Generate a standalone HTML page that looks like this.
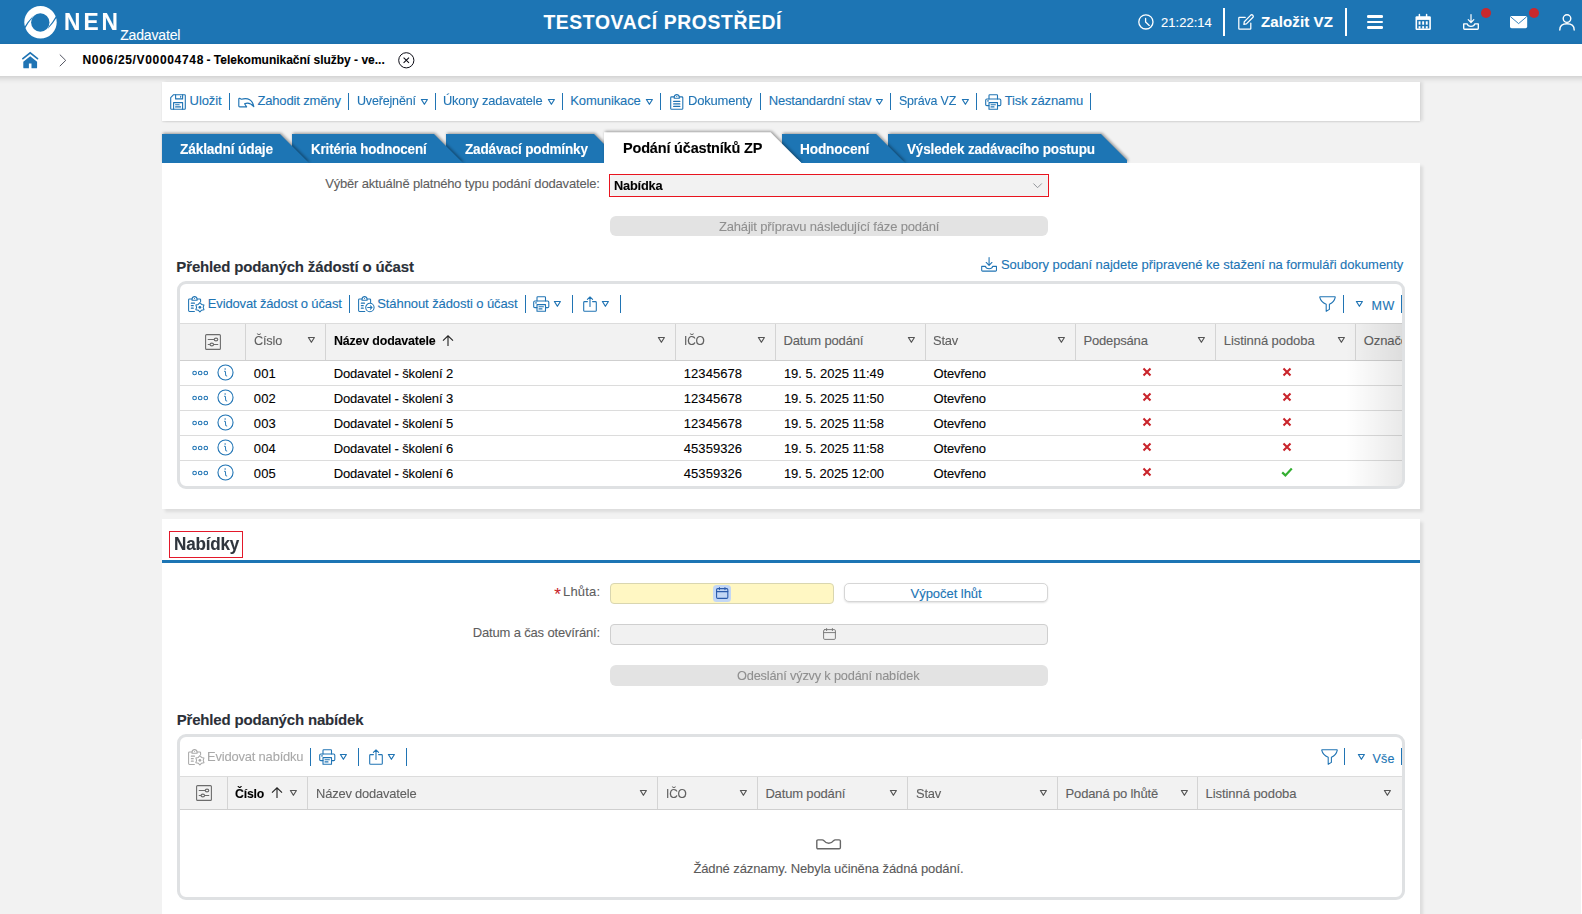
<!DOCTYPE html>
<html lang="cs"><head><meta charset="utf-8"><title>NEN - Zadavatel</title>
<style>
html,body{margin:0;padding:0}
body{width:1582px;height:914px;overflow:hidden;background:#f2f2f2;font-family:"Liberation Sans", sans-serif;position:relative}
.t{position:absolute;white-space:pre;line-height:1;margin:0;padding:0;-webkit-text-stroke:0.1px currentColor}
.i{position:absolute;overflow:visible}
.b{position:absolute;display:block}
a{text-decoration:none;color:inherit}
</style></head><body>
<header class="b" style="left:0;top:0;width:1582px;height:44px;background:#1d75b4"><svg class="i" style="left:23.5px;top:5.5px" width="33" height="33" viewBox="0 0 33 33" ><circle cx="16.5" cy="16.3" r="16.2" fill="#fff"/><circle cx="16.3" cy="16.5" r="9.2" fill="#1d75b4"/>
<path d="M-0.2 21.9 Q3.6 15.2 9.1 9.9 L7.9 12.5 Q4.2 16.8 1.1 22.4 Z" fill="#1d75b4"/>
<path d="M33.0 10.9 Q29.2 17.6 23.7 22.9 L24.9 20.3 Q28.6 16 31.7 10.4 Z" fill="#1d75b4"/></svg><span class="t" style="left:63.68px;top:10.00px;font-size:24px;color:#fff;letter-spacing:3.200px;transform:scaleX(0.9458);transform-origin:0 0;font-weight:700;">NEN</span><span class="t" style="left:120.23px;top:28.00px;font-size:14px;color:#fff;letter-spacing:-0.166px;">Zadavatel</span><span class="t" style="left:543.44px;top:13.00px;font-size:19.3px;color:#fff;letter-spacing:0.644px;font-weight:700;">TESTOVACÍ PROSTŘEDÍ</span><svg class="i" style="left:1137.5px;top:14px" width="16" height="16" viewBox="0 0 16 16" ><circle cx="7.9" cy="7.9" r="7.1" fill="none" stroke="#fff" stroke-width="1.3"/><path d="M7.6 4.4 V8.1 L11.3 11.4" fill="none" stroke="#fff" stroke-width="1.3" stroke-linecap="round" stroke-linejoin="round"/></svg><span class="t" style="left:1160.99px;top:16.00px;font-size:13px;color:#fff;letter-spacing:0.023px;">21:22:14</span><i class="b" style="left:1222.90px;top:8.3px;width:2.2px;height:28.1px;background:#fff"></i><svg class="i" style="left:1237.5px;top:14px" width="16.5" height="16" viewBox="0 0 16.5 16" ><g fill="none" stroke="#fff" stroke-width="1.25" stroke-linejoin="round" stroke-linecap="round">
<path d="M7.2 3.4 H1.4 Q0.8 3.4 0.8 4 V14.6 Q0.8 15.2 1.4 15.2 H12.2 Q12.8 15.2 12.8 14.6 V9.2"/>
<path d="M12.8 1.1 Q13.8 0.3 14.8 1.3 Q15.8 2.3 15 3.3 L8.4 9.9 L5.9 10.3 L6.3 7.7 Z"/></g></svg><span class="t" style="left:1261.08px;top:14.00px;font-size:15px;color:#fff;letter-spacing:0.099px;font-weight:700;">Založit VZ</span><i class="b" style="left:1345.00px;top:8.3px;width:2.2px;height:28.1px;background:#fff"></i><i class="b" style="left:1367px;top:15.2px;width:16px;height:2.4px;border-radius:1.2px;background:#fff"></i><i class="b" style="left:1367px;top:20.8px;width:16px;height:2.4px;border-radius:1.2px;background:#fff"></i><i class="b" style="left:1367px;top:26.4px;width:16px;height:2.4px;border-radius:1.2px;background:#fff"></i><svg class="i" style="left:1414.6px;top:13.8px" width="16.4" height="16.4" viewBox="0 0 16.4 16.4" ><path d="M1.7 2.3 H14.7 Q15.9 2.3 15.9 3.5 V14.8 Q15.9 16 14.7 16 H1.7 Q0.5 16 0.5 14.8 V3.5 Q0.5 2.3 1.7 2.3 Z" fill="#fff"/>
<path d="M4.4 0.6 V3.6 M11.6 0.6 V3.6" stroke="#fff" stroke-width="1.5" stroke-linecap="round"/>
<rect x="2.1" y="5.9" width="12.2" height="8.6" fill="#1d75b4"/>
<g fill="#fff"><rect x="3.6" y="7.3" width="1.9" height="3.4"/><rect x="7.2" y="7.3" width="1.9" height="3.4"/><rect x="10.8" y="7.3" width="1.9" height="3.4"/>
<rect x="3.6" y="12.2" width="1.9" height="2.4"/><rect x="7.2" y="12.2" width="1.9" height="2.4"/><rect x="10.8" y="12.2" width="1.9" height="2.4"/></g></svg><svg class="i" style="left:1462.9px;top:14px" width="16" height="16" viewBox="0 0 16 16" ><g fill="none" stroke="#fff" stroke-linejoin="round" stroke-linecap="round">
<path d="M8 0.5 V8.2 M5.2 5.6 L8 8.5 L10.8 5.6" stroke-width="1.2"/>
<path d="M0.7 9.9 H4.2 Q4.8 12.4 8 12.4 Q11.2 12.4 11.8 9.9 H15.3 V14.3 Q15.3 15.2 14.4 15.2 H1.6 Q0.7 15.2 0.7 14.3 Z" stroke-width="1.35"/></g></svg><i class="b" style="left:1481.2px;top:8px;width:10px;height:10px;border-radius:5px;background:#c9282d"></i><svg class="i" style="left:1510px;top:15.8px" width="17.2" height="12.2" viewBox="0 0 17.2 12.2" ><rect x="0" y="0" width="17.2" height="12.2" rx="1.6" fill="#fff"/><path d="M0.6 0.8 L8.6 7.6 L16.6 0.8" fill="none" stroke="#1d75b4" stroke-width="0.9"/></svg><i class="b" style="left:1529px;top:8px;width:10px;height:10px;border-radius:5px;background:#c9282d"></i><svg class="i" style="left:1558.8px;top:13.8px" width="16" height="16.4" viewBox="0 0 16 16.4" ><circle cx="8" cy="4.6" r="3.8" fill="none" stroke="#fff" stroke-width="1.4"/><path d="M0.8 16 Q0.8 9.8 8 9.8 Q15.2 9.8 15.2 16" fill="none" stroke="#fff" stroke-width="1.4" stroke-linecap="round"/></svg></header><nav class="b" style="left:-20px;top:44px;width:1622px;height:32px;background:#fff;box-shadow:0 2px 6px rgba(0,0,0,.17)"><div class="b" style="left:20px;top:0"><svg class="i" style="left:22px;top:7.7px" width="16.4" height="16.4" viewBox="0 0 16.4 16.4" ><path d="M0.9 6.7 L8.2 0.9 L15.5 6.7" fill="none" stroke="#2074b4" stroke-width="1.7" stroke-linecap="round" stroke-linejoin="miter"/>
<path d="M8.2 4.2 L15.1 9.7 V15.4 Q15.1 16.3 14.2 16.3 H9.5 V11.5 H6.9 V16.3 H2.2 Q1.3 16.3 1.3 15.4 V9.7 Z" fill="#2074b4"/></svg><svg class="i" style="left:59px;top:9.6px" width="8" height="13" viewBox="0 0 8 13" ><path d="M0.8 0.6 L6.7 6.4 L0.8 12.2" fill="none" stroke="#3f4250" stroke-width="0.9"/></svg><span class="t" style="left:82.54px;top:10.00px;font-size:12px;color:#000;letter-spacing:0.668px;font-weight:700;">N006/25/V00004748</span><span class="t" style="left:206.54px;top:10.00px;font-size:12px;color:#000;letter-spacing:-0.010px;font-weight:700;">- Telekomunikační služby - ve...</span><svg class="i" style="left:397.5px;top:7.7px" width="16.4" height="16.4" viewBox="0 0 16.4 16.4" ><circle cx="8.3" cy="8.3" r="7.6" fill="none" stroke="#0a0a14" stroke-width="1"/><path d="M5.6 5.7 L11 11 M11 5.7 L5.6 11" stroke="#0a0a14" stroke-width="1.05"/></svg></div></nav><div class="b" style="left:162px;top:82px;width:1258px;height:39px;background:#fff;box-shadow:3px 0 3px rgba(0,0,0,.09),0 1px 1.5px rgba(0,0,0,.09)"><svg class="i" style="left:8px;top:12px" width="16" height="16" viewBox="0 0 16 16" ><g fill="none" stroke="#2074b4" stroke-width="1.1" stroke-linejoin="round" stroke-linecap="round">
<path d="M3.6 0.7 H14.6 Q15.3 0.7 15.3 1.4 V14.6 Q15.3 15.3 14.6 15.3 H1.4 Q0.7 15.3 0.7 14.6 V3.6 Z"/>
<path d="M5.6 0.7 V4.9 H12.6 V0.7"/><path d="M10.6 2.2 V3.2"/>
<path d="M3.6 15.3 V8.6 H12.6 V15.3"/><path d="M5.6 10.8 H9.2 M5.6 12.9 H10.6"/></g></svg><span class="t" style="left:27.59px;top:12.00px;font-size:13px;color:#2074b4;letter-spacing:-0.089px;">Uložit</span><svg class="i" style="left:75.6px;top:14.599999999999994px" width="17" height="11" viewBox="0 0 17 11" ><path d="M0.8 1.9 Q0.8 1.1 1.6 1.3 L3.4 2.2 Q13.8 -0.4 15.8 9.6 Q11.4 4.6 6.6 6.8 L8.6 9.9 H1.7 Q0.8 9.9 0.8 9 Z" fill="none" stroke="#2074b4" stroke-width="1.15" stroke-linejoin="round"/></svg><span class="t" style="left:95.39px;top:12.00px;font-size:13px;color:#2074b4;letter-spacing:-0.141px;">Zahodit změny</span><span class="t" style="left:194.89px;top:12.00px;font-size:13px;color:#2074b4;letter-spacing:-0.180px;transform:scaleX(0.9627);transform-origin:0 0;">Uveřejnění</span><span class="t" style="left:281.49px;top:12.00px;font-size:13px;color:#2074b4;letter-spacing:-0.180px;transform:scaleX(0.9894);transform-origin:0 0;">Úkony zadavatele</span><span class="t" style="left:408.29px;top:12.00px;font-size:13px;color:#2074b4;letter-spacing:-0.119px;">Komunikace</span><svg class="i" style="left:507.79999999999995px;top:12px" width="13.5" height="16" viewBox="0 0 13.5 16" ><g fill="none" stroke="#2074b4" stroke-width="1.1" stroke-linejoin="round" stroke-linecap="round">
<path d="M4.2 2.9 H1.6 Q0.7 2.9 0.7 3.8 V14.4 Q0.7 15.3 1.6 15.3 H11.9 Q12.8 15.3 12.8 14.4 V3.8 Q12.8 2.9 11.9 2.9 H9.3"/>
<path d="M4.2 4.3 V2.9 Q4.6 0.6 6.75 0.6 Q8.9 0.6 9.3 2.9 V4.3 Z"/>
<path d="M3.7 7.4 H9.8 M3.7 9.9 H9.8 M3.7 12.4 H9.8" stroke-width="1.3"/></g><circle cx="6.75" cy="2.5" r="0.6" fill="#2074b4"/></svg><span class="t" style="left:526.49px;top:12.00px;font-size:13px;color:#2074b4;letter-spacing:-0.180px;transform:scaleX(0.9994);transform-origin:0 0;">Dokumenty</span><span class="t" style="left:606.68px;top:12.00px;font-size:13px;color:#2074b4;letter-spacing:-0.171px;">Nestandardní stav</span><span class="t" style="left:737.18px;top:12.00px;font-size:13px;color:#2074b4;letter-spacing:-0.180px;transform:scaleX(0.9548);transform-origin:0 0;">Správa VZ</span><svg class="i" style="left:822.6px;top:12px" width="16.5" height="16" viewBox="0 0 16.5 16" ><g fill="none" stroke="#2074b4" stroke-width="1.1" stroke-linejoin="round" stroke-linecap="round">
<path d="M4 5 V1.4 Q4 0.7 4.7 0.7 H11.8 Q12.5 0.7 12.5 1.4 V5"/>
<path d="M4 11.6 H1.9 Q0.7 11.6 0.7 10.4 V6.2 Q0.7 5 1.9 5 H14.6 Q15.8 5 15.8 6.2 V10.4 Q15.8 11.6 14.6 11.6 H12.5"/>
<path d="M4 8.6 H12.5 V15.3 H4 Z"/><path d="M6 10.8 H10.4 M6 12.9 H9"/><path d="M2.6 6.9 H3.4"/></g></svg><span class="t" style="left:842.78px;top:12.00px;font-size:13px;color:#2074b4;letter-spacing:-0.122px;">Tisk záznamu</span><i class="b" style="left:66.75px;top:11.099999999999994px;width:1.3px;height:16.6px;background:#2074b4"></i><i class="b" style="left:185.85px;top:11.099999999999994px;width:1.3px;height:16.6px;background:#2074b4"></i><i class="b" style="left:272.85px;top:11.099999999999994px;width:1.3px;height:16.6px;background:#2074b4"></i><i class="b" style="left:399.85px;top:11.099999999999994px;width:1.3px;height:16.6px;background:#2074b4"></i><i class="b" style="left:497.75px;top:11.099999999999994px;width:1.3px;height:16.6px;background:#2074b4"></i><i class="b" style="left:598.05px;top:11.099999999999994px;width:1.3px;height:16.6px;background:#2074b4"></i><i class="b" style="left:727.95px;top:11.099999999999994px;width:1.3px;height:16.6px;background:#2074b4"></i><i class="b" style="left:813.85px;top:11.099999999999994px;width:1.3px;height:16.6px;background:#2074b4"></i><i class="b" style="left:928.05px;top:11.099999999999994px;width:1.3px;height:16.6px;background:#2074b4"></i><svg class="i" style="left:257.8px;top:15.5px" width="8.8" height="7.6" viewBox="-1 -1 8.8 7.6" ><path d="M0.4 0.5 H6.3999999999999995 L3.4 5.3 Z" fill="none" stroke="#2074b4" stroke-width="1.2" stroke-linejoin="round"/></svg><svg class="i" style="left:384.79999999999995px;top:15.5px" width="8.8" height="7.6" viewBox="-1 -1 8.8 7.6" ><path d="M0.4 0.5 H6.3999999999999995 L3.4 5.3 Z" fill="none" stroke="#2074b4" stroke-width="1.2" stroke-linejoin="round"/></svg><svg class="i" style="left:482.5px;top:15.5px" width="8.8" height="7.6" viewBox="-1 -1 8.8 7.6" ><path d="M0.4 0.5 H6.3999999999999995 L3.4 5.3 Z" fill="none" stroke="#2074b4" stroke-width="1.2" stroke-linejoin="round"/></svg><svg class="i" style="left:713.2px;top:15.5px" width="8.8" height="7.6" viewBox="-1 -1 8.8 7.6" ><path d="M0.4 0.5 H6.3999999999999995 L3.4 5.3 Z" fill="none" stroke="#2074b4" stroke-width="1.2" stroke-linejoin="round"/></svg><svg class="i" style="left:798.7px;top:15.5px" width="8.8" height="7.6" viewBox="-1 -1 8.8 7.6" ><path d="M0.4 0.5 H6.3999999999999995 L3.4 5.3 Z" fill="none" stroke="#2074b4" stroke-width="1.2" stroke-linejoin="round"/></svg></div><div class="b" style="left:0;top:0;width:0;height:0"><div class="b" style="left:162px;top:134px;width:155px;height:29px;z-index:16;filter:drop-shadow(1px -1px 1.5px rgba(0,0,0,.38))"><svg class="i" style="left:0;top:0" width="155" height="29" viewBox="0 0 155 29"><polygon points="0,0 118,0 147,29 147,29 0,29" fill="#1d75b4"/></svg><span class="t" style="left:18.34px;top:9.00px;font-size:13.8px;color:#fff;letter-spacing:-0.180px;transform:scaleX(0.9961);transform-origin:0 0;font-weight:700;">Základní údaje</span></div><div class="b" style="left:292px;top:134px;width:179px;height:29px;z-index:15;filter:drop-shadow(1px -1px 1.5px rgba(0,0,0,.38))"><svg class="i" style="left:0;top:0" width="179" height="29" viewBox="0 0 179 29"><polygon points="0,0 142,0 171,29 171,29 0,29" fill="#1d75b4"/></svg><span class="t" style="left:19.04px;top:9.00px;font-size:13.8px;color:#fff;letter-spacing:-0.180px;transform:scaleX(0.9731);transform-origin:0 0;font-weight:700;">Kritéria hodnocení</span></div><div class="b" style="left:446px;top:134px;width:185px;height:29px;z-index:14;filter:drop-shadow(1px -1px 1.5px rgba(0,0,0,.38))"><svg class="i" style="left:0;top:0" width="185" height="29" viewBox="0 0 185 29"><polygon points="0,0 148,0 177,29 177,29 0,29" fill="#1d75b4"/></svg><span class="t" style="left:18.54px;top:9.00px;font-size:13.8px;color:#fff;letter-spacing:-0.180px;transform:scaleX(0.9822);transform-origin:0 0;font-weight:700;">Zadávací podmínky</span></div><div class="b" style="left:604px;top:132px;width:205px;height:31px;z-index:17;filter:drop-shadow(1px -1px 1.5px rgba(0,0,0,.38))"><svg class="i" style="left:0;top:0" width="205" height="31" viewBox="0 0 205 31"><polygon points="0,0.3 166.60000000000002,0.3 197.3,31.0 197.3,31 0,31" fill="#fff"/></svg><span class="t" style="left:18.60px;top:9.00px;font-size:14.5px;color:#000;letter-spacing:-0.180px;transform:scaleX(0.9995);transform-origin:0 0;font-weight:700;">Podání účastníků ZP</span></div><svg class="i" style="left:604px;top:159px;z-index:27" width="200" height="6" viewBox="0 0 200 6"><polygon points="0,0 193.3,0 197.3,4 197.3,6 0,6" fill="#fff"/></svg><div class="b" style="left:782px;top:134px;width:131px;height:29px;z-index:13;filter:drop-shadow(1px -1px 1.5px rgba(0,0,0,.38))"><svg class="i" style="left:0;top:0" width="131" height="29" viewBox="0 0 131 29"><polygon points="0,0 94.20000000000005,0 123.20000000000005,29 123.20000000000005,29 0,29" fill="#1d75b4"/></svg><span class="t" style="left:18.34px;top:9.00px;font-size:13.8px;color:#fff;letter-spacing:-0.180px;transform:scaleX(0.9940);transform-origin:0 0;font-weight:700;">Hodnocení</span></div><div class="b" style="left:888px;top:134px;width:250px;height:29px;z-index:12;filter:drop-shadow(1px -1px 1.5px rgba(0,0,0,.38))"><svg class="i" style="left:0;top:0" width="250" height="29" viewBox="0 0 250 29"><polygon points="0,0 213,0 239,26 239,29 0,29" fill="#1d75b4"/></svg><span class="t" style="left:18.54px;top:9.00px;font-size:13.8px;color:#fff;letter-spacing:-0.180px;transform:scaleX(0.9813);transform-origin:0 0;font-weight:700;">Výsledek zadávacího postupu</span></div></div><section class="b" style="left:162px;top:163px;width:1258px;height:346px;background:#fff;box-shadow:3px 3px 3px rgba(0,0,0,.09);z-index:20"><span class="t" style="left:163.18px;top:14.00px;font-size:13px;color:#5e5e5e;letter-spacing:-0.173px;">Výběr aktuálně platného typu podání dodavatele:</span><div class="b" style="left:447px;top:11px;width:437.5px;height:21px;border:1px solid #e8141f;background:#fff"><i class="b" style="left:0;top:0;right:0;bottom:0;border-radius:3.5px;background:#f2f2f2"></i></div><span class="t" style="left:452.49px;top:16.00px;font-size:13px;color:#000;letter-spacing:-0.180px;transform:scaleX(0.9833);transform-origin:0 0;font-weight:700;">Nabídka</span><svg class="i" style="left:870.8px;top:19.80000000000001px" width="9.2" height="5.4" viewBox="0 0 9.2 5.4" ><path d="M0.4 0.5 L4.6 4.7 L8.8 0.5" fill="none" stroke="#8c8f94" stroke-width="0.95"/></svg><div class="b" style="left:448px;top:53.30000000000001px;width:438px;height:19.5px;border-radius:6px;background:#e3e3e3"></div><span class="t" style="left:556.88px;top:57.00px;font-size:13px;color:#8f8f8f;letter-spacing:-0.180px;transform:scaleX(0.9993);transform-origin:0 0;">Zahájit přípravu následující fáze podání</span><span class="t" style="left:14.37px;top:96.00px;font-size:15px;color:#2b3038;letter-spacing:-0.159px;font-weight:700;">Přehled podaných žádostí o účast</span><svg class="i" style="left:818.6px;top:94.19999999999999px" width="16.169999999999998" height="14.7" viewBox="0 0 16.5 15" ><g fill="none" stroke="#2074b4" stroke-width="1.1" stroke-linejoin="round" stroke-linecap="round">
<path d="M8.25 0.6 V8.2 M5.3 5.6 L8.25 8.5 L11.2 5.6"/>
<path d="M0.7 9.6 H4.6 Q5 12 8.25 12 Q11.5 12 11.9 9.6 H15.8 V13.5 Q15.8 14.4 14.9 14.4 H1.6 Q0.7 14.4 0.7 13.5 Z"/></g></svg><span class="t" style="left:838.88px;top:95.00px;font-size:13px;color:#2074b4;letter-spacing:-0.045px;">Soubory podaní najdete připravené ke stažení na formuláři dokumenty</span><div class="b" style="left:15px;top:118px;width:1222px;height:202px;border:3px solid #dfe1e3;border-radius:9px;overflow:hidden;background:#fff"><svg class="i" style="left:8px;top:11.899999999999977px" width="17" height="16.5" viewBox="0 0 17 16.5" ><g fill="none" stroke="#2074b4" stroke-width="1.05" stroke-linejoin="round" stroke-linecap="round">
<path d="M6.4 15.5 H1.5 Q0.6 15.5 0.6 14.6 V3.8 Q0.6 2.9 1.5 2.9 H4.0 M9.1 2.9 H11.7 Q12.6 2.9 12.6 3.8 V5.6"/>
<path d="M4.0 4.3 V2.9 Q4.4 0.6 6.55 0.6 Q8.7 0.6 9.1 2.9 V4.3 Z"/>
<path d="M3.4 7.2 H6.4 M3.4 9.7 H5.2 M3.4 12.2 H5.2" stroke-width="1.3"/>
<path d="M11.90 6.60 L13.55 8.44 L15.97 8.95 L15.20 11.30 L15.97 13.65 L13.55 14.16 L11.90 16.00 L10.25 14.16 L7.83 13.65 L8.60 11.30 L7.83 8.95 L10.25 8.44 Z"/>
</g><circle cx="11.9" cy="11.3" r="1.35" fill="#2074b4"/><circle cx="6.55" cy="2.5" r="0.55" fill="#2074b4"/></svg><span class="t" style="left:27.79px;top:13.00px;font-size:13px;color:#2074b4;letter-spacing:-0.147px;">Evidovat žádost o účast</span><i class="b" style="left:168.95px;top:11px;width:1.3px;height:17.8px;background:#2074b4"></i><svg class="i" style="left:178px;top:11.899999999999977px" width="17" height="16.5" viewBox="0 0 17 16.5" ><g fill="none" stroke="#2074b4" stroke-width="1.05" stroke-linejoin="round" stroke-linecap="round">
<path d="M6.8 15.5 H1.5 Q0.6 15.5 0.6 14.6 V3.8 Q0.6 2.9 1.5 2.9 H4.0 M9.1 2.9 H11.7 Q12.6 2.9 12.6 3.8 V6.4"/>
<path d="M4.0 4.3 V2.9 Q4.4 0.6 6.55 0.6 Q8.7 0.6 9.1 2.9 V4.3 Z"/>
<path d="M3.4 7.2 H6.4 M3.4 9.7 H5.2 M3.4 12.2 H5.2" stroke-width="1.3"/>
<circle cx="11.9" cy="11.5" r="4.2"/><path d="M9.7 11.5 H14 M12.4 9.8 L14.1 11.5 L12.4 13.2"/></g><circle cx="6.55" cy="2.5" r="0.55" fill="#2074b4"/></svg><span class="t" style="left:197.28px;top:13.00px;font-size:13px;color:#2074b4;letter-spacing:-0.087px;">Stáhnout žádosti o účast</span><i class="b" style="left:344.85px;top:11px;width:1.3px;height:17.8px;background:#2074b4"></i><svg class="i" style="left:353.4px;top:11.600000000000023px" width="16.5" height="16" viewBox="0 0 16.5 16" ><g fill="none" stroke="#2074b4" stroke-width="1.1" stroke-linejoin="round" stroke-linecap="round">
<path d="M4 5 V1.4 Q4 0.7 4.7 0.7 H11.8 Q12.5 0.7 12.5 1.4 V5"/>
<path d="M4 11.6 H1.9 Q0.7 11.6 0.7 10.4 V6.2 Q0.7 5 1.9 5 H14.6 Q15.8 5 15.8 6.2 V10.4 Q15.8 11.6 14.6 11.6 H12.5"/>
<path d="M4 8.6 H12.5 V15.3 H4 Z"/><path d="M6 10.8 H10.4 M6 12.9 H9"/><path d="M2.6 6.9 H3.4"/></g></svg><svg class="i" style="left:373.29999999999995px;top:16.19999999999999px" width="8.8" height="7.6" viewBox="-1 -1 8.8 7.6" ><path d="M0.4 0.5 H6.3999999999999995 L3.4 5.3 Z" fill="none" stroke="#2074b4" stroke-width="1.2" stroke-linejoin="round"/></svg><i class="b" style="left:391.85px;top:11px;width:1.3px;height:17.8px;background:#2074b4"></i><svg class="i" style="left:402.79999999999995px;top:11.600000000000023px" width="14" height="16" viewBox="0 0 14 16" ><g fill="none" stroke="#2074b4" stroke-width="1.1" stroke-linejoin="round" stroke-linecap="round">
<path d="M4.4 5.6 H1.6 Q0.7 5.6 0.7 6.5 V14.4 Q0.7 15.3 1.6 15.3 H12.4 Q13.3 15.3 13.3 14.4 V6.5 Q13.3 5.6 12.4 5.6 H9.6"/>
<path d="M7 10.4 V0.9 M4.4 3.4 L7 0.8 L9.6 3.4"/></g></svg><svg class="i" style="left:421.1px;top:16.19999999999999px" width="8.8" height="7.6" viewBox="-1 -1 8.8 7.6" ><path d="M0.4 0.5 H6.3999999999999995 L3.4 5.3 Z" fill="none" stroke="#2074b4" stroke-width="1.2" stroke-linejoin="round"/></svg><i class="b" style="left:439.95px;top:11px;width:1.3px;height:17.8px;background:#2074b4"></i><svg class="i" style="left:1139.3px;top:11.600000000000023px" width="17" height="16" viewBox="0 0 17 16" ><path d="M1 0.8 H16 Q16.4 0.8 16.2 1.4 Q15.4 6 10.4 8.2 V13.4 L7.2 15.3 V8.2 Q1.8 6 0.8 1.4 Q0.6 0.8 1 0.8 Z" fill="none" stroke="#2074b4" stroke-width="1.1" stroke-linejoin="round"/></svg><i class="b" style="left:1163.15px;top:11px;width:1.3px;height:17.8px;background:#2074b4"></i><svg class="i" style="left:1175.2px;top:16.19999999999999px" width="8.8" height="7.6" viewBox="-1 -1 8.8 7.6" ><path d="M0.4 0.5 H6.3999999999999995 L3.4 5.3 Z" fill="none" stroke="#2074b4" stroke-width="1.2" stroke-linejoin="round"/></svg><span class="t" style="left:1191.51px;top:16.00px;font-size:12.5px;color:#2074b4;letter-spacing:0.612px;">MW</span><i class="b" style="left:1220.75px;top:11px;width:1.3px;height:17.8px;background:#2074b4"></i><div class="b" style="left:0;top:39px;width:1222px;height:36px;background:#f2f2f2;border-top:1px solid #dcdcdc;border-bottom:1px solid #cfcfcf"></div><i class="b" style="left:65.0px;top:40px;width:1px;height:36px;background:#d4d4d4"></i><i class="b" style="left:145.0px;top:40px;width:1px;height:36px;background:#d4d4d4"></i><i class="b" style="left:495.0px;top:40px;width:1px;height:36px;background:#d4d4d4"></i><i class="b" style="left:595.0px;top:40px;width:1px;height:36px;background:#d4d4d4"></i><i class="b" style="left:745.0px;top:40px;width:1px;height:36px;background:#d4d4d4"></i><i class="b" style="left:895.0px;top:40px;width:1px;height:36px;background:#d4d4d4"></i><i class="b" style="left:1035.0px;top:40px;width:1px;height:36px;background:#d4d4d4"></i><i class="b" style="left:1175.0px;top:40px;width:1px;height:36px;background:#d4d4d4"></i><svg class="i" style="left:24.80000000000001px;top:50px" width="16" height="16" viewBox="0 0 16 16" ><g fill="none" stroke="#6c6c6c" stroke-width="1.1" stroke-linejoin="round" stroke-linecap="round">
<rect x="0.6" y="0.6" width="14.8" height="14.8" rx="1"/>
<path d="M3.2 5.5 H9.2 M3.2 10.5 H4.9 M8.7 10.5 H12.8"/>
<ellipse cx="11" cy="5.5" rx="1.8" ry="1.35"/><ellipse cx="6.8" cy="10.5" rx="1.8" ry="1.35"/></g></svg><span class="t" style="left:73.78px;top:50.00px;font-size:13px;color:#606060;letter-spacing:-0.180px;transform:scaleX(0.9781);transform-origin:0 0;">Číslo</span><span class="t" style="left:153.68px;top:50.00px;font-size:13px;color:#000;letter-spacing:-0.180px;transform:scaleX(0.9555);transform-origin:0 0;font-weight:700;">Název dodavatele</span><svg class="i" style="left:261.6px;top:51px" width="12" height="11.5" viewBox="0 0 12 11.5" ><path d="M6 11 V1 M1 5.6 L6 0.8 L11 5.6" fill="none" stroke="#222" stroke-width="1.1"/></svg><span class="t" style="left:503.79px;top:50.00px;font-size:13px;color:#606060;letter-spacing:-0.180px;transform:scaleX(0.9169);transform-origin:0 0;">IČO</span><span class="t" style="left:603.49px;top:50.00px;font-size:13px;color:#606060;letter-spacing:-0.154px;">Datum podání</span><span class="t" style="left:753.49px;top:50.00px;font-size:13px;color:#606060;letter-spacing:-0.180px;transform:scaleX(0.9920);transform-origin:0 0;">Stav</span><span class="t" style="left:903.49px;top:50.00px;font-size:13px;color:#606060;letter-spacing:-0.176px;">Podepsána</span><span class="t" style="left:1043.79px;top:50.00px;font-size:13px;color:#606060;letter-spacing:-0.067px;">Listinná podoba</span><span class="t" style="left:1183.69px;top:50.00px;font-size:13px;color:#606060;letter-spacing:-0.085px;">Označeno</span><svg class="i" style="left:127.30000000000001px;top:52.39999999999998px" width="8.8" height="7.6" viewBox="-1 -1 8.8 7.6" ><path d="M0.4 0.5 H6.3999999999999995 L3.4 5.3 Z" fill="none" stroke="#555" stroke-width="1.2" stroke-linejoin="round"/></svg><svg class="i" style="left:477.30000000000007px;top:52.39999999999998px" width="8.8" height="7.6" viewBox="-1 -1 8.8 7.6" ><path d="M0.4 0.5 H6.3999999999999995 L3.4 5.3 Z" fill="none" stroke="#555" stroke-width="1.2" stroke-linejoin="round"/></svg><svg class="i" style="left:577.1px;top:52.39999999999998px" width="8.8" height="7.6" viewBox="-1 -1 8.8 7.6" ><path d="M0.4 0.5 H6.3999999999999995 L3.4 5.3 Z" fill="none" stroke="#555" stroke-width="1.2" stroke-linejoin="round"/></svg><svg class="i" style="left:727.3000000000001px;top:52.39999999999998px" width="8.8" height="7.6" viewBox="-1 -1 8.8 7.6" ><path d="M0.4 0.5 H6.3999999999999995 L3.4 5.3 Z" fill="none" stroke="#555" stroke-width="1.2" stroke-linejoin="round"/></svg><svg class="i" style="left:877.3px;top:52.39999999999998px" width="8.8" height="7.6" viewBox="-1 -1 8.8 7.6" ><path d="M0.4 0.5 H6.3999999999999995 L3.4 5.3 Z" fill="none" stroke="#555" stroke-width="1.2" stroke-linejoin="round"/></svg><svg class="i" style="left:1017.3999999999999px;top:52.39999999999998px" width="8.8" height="7.6" viewBox="-1 -1 8.8 7.6" ><path d="M0.4 0.5 H6.3999999999999995 L3.4 5.3 Z" fill="none" stroke="#555" stroke-width="1.2" stroke-linejoin="round"/></svg><svg class="i" style="left:1157.0px;top:52.39999999999998px" width="8.8" height="7.6" viewBox="-1 -1 8.8 7.6" ><path d="M0.4 0.5 H6.3999999999999995 L3.4 5.3 Z" fill="none" stroke="#555" stroke-width="1.2" stroke-linejoin="round"/></svg><svg class="i" style="left:11.599999999999994px;top:86.1px" width="17" height="6" viewBox="0 0 17 6" ><g fill="none" stroke="#2074b4" stroke-width="1.1"><circle cx="2.6" cy="3" r="1.8"/><circle cx="8.2" cy="3" r="1.8"/><circle cx="13.8" cy="3" r="1.8"/></g></svg><svg class="i" style="left:37.44999999999999px;top:80.35000000000002px" width="17" height="17" viewBox="0 0 17 17" ><circle cx="8.5" cy="8.5" r="7.55" fill="none" stroke="#2074b4" stroke-width="1.1"/>
<circle cx="8.1" cy="5.1" r="0.75" fill="#2074b4"/><path d="M7.5 7.3 H8.4 L8.7 11.6 L9.8 12" fill="none" stroke="#2074b4" stroke-width="0.95" stroke-linecap="round" stroke-linejoin="round"/></svg><span class="t" style="left:73.78px;top:83.00px;font-size:13px;color:#000;letter-spacing:0.185px;">001</span><span class="t" style="left:153.68px;top:83.00px;font-size:13px;color:#000;letter-spacing:-0.133px;">Dodavatel - školení 2</span><span class="t" style="left:503.79px;top:83.00px;font-size:13px;color:#000;letter-spacing:0.061px;">12345678</span><span class="t" style="left:603.88px;top:83.00px;font-size:13px;color:#000;letter-spacing:-0.005px;">19. 5. 2025 11:49</span><span class="t" style="left:753.49px;top:83.00px;font-size:13px;color:#000;letter-spacing:-0.130px;">Otevřeno</span><svg class="i" style="left:961.5999999999999px;top:83.30000000000001px" width="10" height="10" viewBox="0 0 10 10" ><path d="M1.5 1.5 L8.5 8.5 M8.5 1.5 L1.5 8.5" stroke="#c9242b" stroke-width="2.1" fill="none"/></svg><svg class="i" style="left:1101.9px;top:83.30000000000001px" width="10" height="10" viewBox="0 0 10 10" ><path d="M1.5 1.5 L8.5 8.5 M8.5 1.5 L1.5 8.5" stroke="#c9242b" stroke-width="2.1" fill="none"/></svg><i class="b" style="left:0;top:101px;width:1222px;height:1px;background:#dcdcdc"></i><svg class="i" style="left:11.599999999999994px;top:111.1px" width="17" height="6" viewBox="0 0 17 6" ><g fill="none" stroke="#2074b4" stroke-width="1.1"><circle cx="2.6" cy="3" r="1.8"/><circle cx="8.2" cy="3" r="1.8"/><circle cx="13.8" cy="3" r="1.8"/></g></svg><svg class="i" style="left:37.44999999999999px;top:105.35000000000002px" width="17" height="17" viewBox="0 0 17 17" ><circle cx="8.5" cy="8.5" r="7.55" fill="none" stroke="#2074b4" stroke-width="1.1"/>
<circle cx="8.1" cy="5.1" r="0.75" fill="#2074b4"/><path d="M7.5 7.3 H8.4 L8.7 11.6 L9.8 12" fill="none" stroke="#2074b4" stroke-width="0.95" stroke-linecap="round" stroke-linejoin="round"/></svg><span class="t" style="left:73.78px;top:108.00px;font-size:13px;color:#000;letter-spacing:0.185px;">002</span><span class="t" style="left:153.68px;top:108.00px;font-size:13px;color:#000;letter-spacing:-0.133px;">Dodavatel - školení 3</span><span class="t" style="left:503.79px;top:108.00px;font-size:13px;color:#000;letter-spacing:0.061px;">12345678</span><span class="t" style="left:603.88px;top:108.00px;font-size:13px;color:#000;letter-spacing:-0.005px;">19. 5. 2025 11:50</span><span class="t" style="left:753.49px;top:108.00px;font-size:13px;color:#000;letter-spacing:-0.130px;">Otevřeno</span><svg class="i" style="left:961.5999999999999px;top:108.30000000000001px" width="10" height="10" viewBox="0 0 10 10" ><path d="M1.5 1.5 L8.5 8.5 M8.5 1.5 L1.5 8.5" stroke="#c9242b" stroke-width="2.1" fill="none"/></svg><svg class="i" style="left:1101.9px;top:108.30000000000001px" width="10" height="10" viewBox="0 0 10 10" ><path d="M1.5 1.5 L8.5 8.5 M8.5 1.5 L1.5 8.5" stroke="#c9242b" stroke-width="2.1" fill="none"/></svg><i class="b" style="left:0;top:126px;width:1222px;height:1px;background:#dcdcdc"></i><svg class="i" style="left:11.599999999999994px;top:136.1px" width="17" height="6" viewBox="0 0 17 6" ><g fill="none" stroke="#2074b4" stroke-width="1.1"><circle cx="2.6" cy="3" r="1.8"/><circle cx="8.2" cy="3" r="1.8"/><circle cx="13.8" cy="3" r="1.8"/></g></svg><svg class="i" style="left:37.44999999999999px;top:130.35000000000002px" width="17" height="17" viewBox="0 0 17 17" ><circle cx="8.5" cy="8.5" r="7.55" fill="none" stroke="#2074b4" stroke-width="1.1"/>
<circle cx="8.1" cy="5.1" r="0.75" fill="#2074b4"/><path d="M7.5 7.3 H8.4 L8.7 11.6 L9.8 12" fill="none" stroke="#2074b4" stroke-width="0.95" stroke-linecap="round" stroke-linejoin="round"/></svg><span class="t" style="left:73.78px;top:133.00px;font-size:13px;color:#000;letter-spacing:0.185px;">003</span><span class="t" style="left:153.68px;top:133.00px;font-size:13px;color:#000;letter-spacing:-0.133px;">Dodavatel - školení 5</span><span class="t" style="left:503.79px;top:133.00px;font-size:13px;color:#000;letter-spacing:0.061px;">12345678</span><span class="t" style="left:603.88px;top:133.00px;font-size:13px;color:#000;letter-spacing:-0.005px;">19. 5. 2025 11:58</span><span class="t" style="left:753.49px;top:133.00px;font-size:13px;color:#000;letter-spacing:-0.130px;">Otevřeno</span><svg class="i" style="left:961.5999999999999px;top:133.3px" width="10" height="10" viewBox="0 0 10 10" ><path d="M1.5 1.5 L8.5 8.5 M8.5 1.5 L1.5 8.5" stroke="#c9242b" stroke-width="2.1" fill="none"/></svg><svg class="i" style="left:1101.9px;top:133.3px" width="10" height="10" viewBox="0 0 10 10" ><path d="M1.5 1.5 L8.5 8.5 M8.5 1.5 L1.5 8.5" stroke="#c9242b" stroke-width="2.1" fill="none"/></svg><i class="b" style="left:0;top:151px;width:1222px;height:1px;background:#dcdcdc"></i><svg class="i" style="left:11.599999999999994px;top:161.1px" width="17" height="6" viewBox="0 0 17 6" ><g fill="none" stroke="#2074b4" stroke-width="1.1"><circle cx="2.6" cy="3" r="1.8"/><circle cx="8.2" cy="3" r="1.8"/><circle cx="13.8" cy="3" r="1.8"/></g></svg><svg class="i" style="left:37.44999999999999px;top:155.35000000000002px" width="17" height="17" viewBox="0 0 17 17" ><circle cx="8.5" cy="8.5" r="7.55" fill="none" stroke="#2074b4" stroke-width="1.1"/>
<circle cx="8.1" cy="5.1" r="0.75" fill="#2074b4"/><path d="M7.5 7.3 H8.4 L8.7 11.6 L9.8 12" fill="none" stroke="#2074b4" stroke-width="0.95" stroke-linecap="round" stroke-linejoin="round"/></svg><span class="t" style="left:73.78px;top:158.00px;font-size:13px;color:#000;letter-spacing:0.185px;">004</span><span class="t" style="left:153.68px;top:158.00px;font-size:13px;color:#000;letter-spacing:-0.133px;">Dodavatel - školení 6</span><span class="t" style="left:503.79px;top:158.00px;font-size:13px;color:#000;letter-spacing:0.061px;">45359326</span><span class="t" style="left:603.88px;top:158.00px;font-size:13px;color:#000;letter-spacing:-0.005px;">19. 5. 2025 11:58</span><span class="t" style="left:753.49px;top:158.00px;font-size:13px;color:#000;letter-spacing:-0.130px;">Otevřeno</span><svg class="i" style="left:961.5999999999999px;top:158.3px" width="10" height="10" viewBox="0 0 10 10" ><path d="M1.5 1.5 L8.5 8.5 M8.5 1.5 L1.5 8.5" stroke="#c9242b" stroke-width="2.1" fill="none"/></svg><svg class="i" style="left:1101.9px;top:158.3px" width="10" height="10" viewBox="0 0 10 10" ><path d="M1.5 1.5 L8.5 8.5 M8.5 1.5 L1.5 8.5" stroke="#c9242b" stroke-width="2.1" fill="none"/></svg><i class="b" style="left:0;top:176px;width:1222px;height:1px;background:#dcdcdc"></i><svg class="i" style="left:11.599999999999994px;top:186.1px" width="17" height="6" viewBox="0 0 17 6" ><g fill="none" stroke="#2074b4" stroke-width="1.1"><circle cx="2.6" cy="3" r="1.8"/><circle cx="8.2" cy="3" r="1.8"/><circle cx="13.8" cy="3" r="1.8"/></g></svg><svg class="i" style="left:37.44999999999999px;top:180.35000000000002px" width="17" height="17" viewBox="0 0 17 17" ><circle cx="8.5" cy="8.5" r="7.55" fill="none" stroke="#2074b4" stroke-width="1.1"/>
<circle cx="8.1" cy="5.1" r="0.75" fill="#2074b4"/><path d="M7.5 7.3 H8.4 L8.7 11.6 L9.8 12" fill="none" stroke="#2074b4" stroke-width="0.95" stroke-linecap="round" stroke-linejoin="round"/></svg><span class="t" style="left:73.78px;top:183.00px;font-size:13px;color:#000;letter-spacing:0.185px;">005</span><span class="t" style="left:153.68px;top:183.00px;font-size:13px;color:#000;letter-spacing:-0.133px;">Dodavatel - školení 6</span><span class="t" style="left:503.79px;top:183.00px;font-size:13px;color:#000;letter-spacing:0.061px;">45359326</span><span class="t" style="left:603.88px;top:183.00px;font-size:13px;color:#000;letter-spacing:-0.064px;">19. 5. 2025 12:00</span><span class="t" style="left:753.49px;top:183.00px;font-size:13px;color:#000;letter-spacing:-0.130px;">Otevřeno</span><svg class="i" style="left:961.5999999999999px;top:183.3px" width="10" height="10" viewBox="0 0 10 10" ><path d="M1.5 1.5 L8.5 8.5 M8.5 1.5 L1.5 8.5" stroke="#c9242b" stroke-width="2.1" fill="none"/></svg><svg class="i" style="left:1100.9px;top:183.10000000000002px" width="12" height="10" viewBox="0 0 12 10" ><path d="M1.2 5.4 L4.4 8.4 L10.8 1.6" stroke="#33ae31" stroke-width="2.2" fill="none"/></svg><i class="b" style="left:1166px;top:39px;width:56px;height:163px;background:linear-gradient(90deg,rgba(0,0,0,0),rgba(0,0,0,.085))"></i></div></section><section class="b" style="left:162px;top:519px;width:1258px;height:400px;background:#fff;box-shadow:3px 3px 3px rgba(0,0,0,.09)"><div class="b" style="left:6.800000000000011px;top:12px;width:72.19999999999999px;height:25px;border:1px solid #e3182a"></div><span class="t" style="left:11.64px;top:17.00px;font-size:17.5px;color:#2f353d;letter-spacing:-0.180px;transform:scaleX(0.9753);transform-origin:0 0;font-weight:700;">Nabídky</span><i class="b" style="left:0;top:41.200000000000045px;width:1258px;height:2.8px;background:#1d75b4"></i><span class="t" style="left:392.27px;top:67.00px;font-size:17px;color:#c9242b;letter-spacing:0.777px;">*</span><span class="t" style="left:400.99px;top:66.00px;font-size:13px;color:#5e5e5e;letter-spacing:0.203px;">Lhůta:</span><div class="b" style="left:447.9px;top:63.60000000000002px;width:222.30000000000007px;height:19.0px;border:1px solid #d9d6b0;border-radius:4px;background:#fff7c3"></div><i class="b" style="left:551.3px;top:66.20000000000005px;width:17.6px;height:16.4px;border-radius:3.5px;background:#c3d7f5"></i><svg class="i" style="left:553.8px;top:67.89999999999998px" width="12.4" height="12" viewBox="0 0 13 12" preserveAspectRatio="none"><g fill="none" stroke="#2b5bab" stroke-width="1.15" stroke-linejoin="round" stroke-linecap="round">
<rect x="0.6" y="1.6" width="11.8" height="9.8" rx="1.2"/><path d="M0.6 4.6 H12.4 M3.6 0.5 V2.6 M9.4 0.5 V2.6"/></g></svg><div class="b" style="left:682.2px;top:64.10000000000002px;width:201.5999999999999px;height:17.299999999999955px;border:1px solid #d6d6d6;border-radius:5px;background:#fff;box-shadow:0 1px 2px rgba(0,0,0,.12)"></div><span class="t" style="left:748.58px;top:68.00px;font-size:13px;color:#2074b4;letter-spacing:-0.043px;">Výpočet lhůt</span><span class="t" style="left:310.69px;top:107.00px;font-size:13px;color:#5e5e5e;letter-spacing:-0.158px;">Datum a čas otevírání:</span><div class="b" style="left:447.9px;top:104.89999999999998px;width:435.9px;height:18.899999999999977px;border:1px solid #cfcfcf;border-radius:4px;background:#f1f1f1"></div><svg class="i" style="left:660.6px;top:108.89999999999998px" width="13" height="12" viewBox="0 0 13 12" preserveAspectRatio="none"><g fill="none" stroke="#777" stroke-width="0.95" stroke-linejoin="round" stroke-linecap="round">
<rect x="0.6" y="1.6" width="11.8" height="9.8" rx="1.2"/><path d="M0.6 4.6 H12.4 M3.6 0.5 V2.6 M9.4 0.5 V2.6"/></g></svg><div class="b" style="left:447.9px;top:146.29999999999995px;width:437.9px;height:20.5px;border-radius:6px;background:#e3e3e3"></div><span class="t" style="left:575.38px;top:150.00px;font-size:13px;color:#8f8f8f;letter-spacing:-0.180px;transform:scaleX(0.9810);transform-origin:0 0;">Odeslání výzvy k podání nabídek</span><span class="t" style="left:14.68px;top:193.00px;font-size:15px;color:#2b3038;letter-spacing:-0.172px;font-weight:700;">Přehled podaných nabídek</span><div class="b" style="left:15px;top:215px;width:1222px;height:160px;border:3px solid #dfe1e3;border-radius:9px;overflow:hidden;background:#fff"><svg class="i" style="left:8px;top:11.5px" width="17" height="16.5" viewBox="0 0 17 16.5" ><g fill="none" stroke="#a9a9a9" stroke-width="1.05" stroke-linejoin="round" stroke-linecap="round">
<path d="M6.4 15.5 H1.5 Q0.6 15.5 0.6 14.6 V3.8 Q0.6 2.9 1.5 2.9 H4.0 M9.1 2.9 H11.7 Q12.6 2.9 12.6 3.8 V5.6"/>
<path d="M4.0 4.3 V2.9 Q4.4 0.6 6.55 0.6 Q8.7 0.6 9.1 2.9 V4.3 Z"/>
<path d="M3.4 7.2 H6.4 M3.4 9.7 H5.2 M3.4 12.2 H5.2" stroke-width="1.3"/>
<path d="M11.90 6.60 L13.55 8.44 L15.97 8.95 L15.20 11.30 L15.97 13.65 L13.55 14.16 L11.90 16.00 L10.25 14.16 L7.83 13.65 L8.60 11.30 L7.83 8.95 L10.25 8.44 Z"/>
</g><circle cx="11.9" cy="11.3" r="1.35" fill="#a9a9a9"/><circle cx="6.55" cy="2.5" r="0.55" fill="#a9a9a9"/></svg><span class="t" style="left:27.38px;top:13.00px;font-size:13px;color:#a9a9a9;letter-spacing:-0.180px;transform:scaleX(0.9952);transform-origin:0 0;">Evidovat nabídku</span><i class="b" style="left:129.95px;top:10.899999999999977px;width:1.3px;height:17.8px;background:#2074b4"></i><svg class="i" style="left:139.39999999999998px;top:11.600000000000023px" width="16.5" height="16" viewBox="0 0 16.5 16" ><g fill="none" stroke="#2074b4" stroke-width="1.1" stroke-linejoin="round" stroke-linecap="round">
<path d="M4 5 V1.4 Q4 0.7 4.7 0.7 H11.8 Q12.5 0.7 12.5 1.4 V5"/>
<path d="M4 11.6 H1.9 Q0.7 11.6 0.7 10.4 V6.2 Q0.7 5 1.9 5 H14.6 Q15.8 5 15.8 6.2 V10.4 Q15.8 11.6 14.6 11.6 H12.5"/>
<path d="M4 8.6 H12.5 V15.3 H4 Z"/><path d="M6 10.8 H10.4 M6 12.9 H9"/><path d="M2.6 6.9 H3.4"/></g></svg><svg class="i" style="left:159.2px;top:16.200000000000045px" width="8.8" height="7.6" viewBox="-1 -1 8.8 7.6" ><path d="M0.4 0.5 H6.3999999999999995 L3.4 5.3 Z" fill="none" stroke="#2074b4" stroke-width="1.2" stroke-linejoin="round"/></svg><i class="b" style="left:177.95px;top:10.899999999999977px;width:1.3px;height:17.8px;background:#2074b4"></i><svg class="i" style="left:188.60000000000002px;top:11.600000000000023px" width="14" height="16" viewBox="0 0 14 16" ><g fill="none" stroke="#2074b4" stroke-width="1.1" stroke-linejoin="round" stroke-linecap="round">
<path d="M4.4 5.6 H1.6 Q0.7 5.6 0.7 6.5 V14.4 Q0.7 15.3 1.6 15.3 H12.4 Q13.3 15.3 13.3 14.4 V6.5 Q13.3 5.6 12.4 5.6 H9.6"/>
<path d="M7 10.4 V0.9 M4.4 3.4 L7 0.8 L9.6 3.4"/></g></svg><svg class="i" style="left:206.7px;top:16.200000000000045px" width="8.8" height="7.6" viewBox="-1 -1 8.8 7.6" ><path d="M0.4 0.5 H6.3999999999999995 L3.4 5.3 Z" fill="none" stroke="#2074b4" stroke-width="1.2" stroke-linejoin="round"/></svg><i class="b" style="left:225.85px;top:10.899999999999977px;width:1.3px;height:17.8px;background:#2074b4"></i><svg class="i" style="left:1140.6px;top:11.799999999999955px" width="17" height="16" viewBox="0 0 17 16" ><path d="M1 0.8 H16 Q16.4 0.8 16.2 1.4 Q15.4 6 10.4 8.2 V13.4 L7.2 15.3 V8.2 Q1.8 6 0.8 1.4 Q0.6 0.8 1 0.8 Z" fill="none" stroke="#2074b4" stroke-width="1.1" stroke-linejoin="round"/></svg><i class="b" style="left:1163.75px;top:11.200000000000045px;width:1.3px;height:17.2px;background:#2074b4"></i><svg class="i" style="left:1176.6px;top:16.200000000000045px" width="8.8" height="7.6" viewBox="-1 -1 8.8 7.6" ><path d="M0.4 0.5 H6.3999999999999995 L3.4 5.3 Z" fill="none" stroke="#2074b4" stroke-width="1.2" stroke-linejoin="round"/></svg><span class="t" style="left:1192.51px;top:16.00px;font-size:12.5px;color:#2074b4;letter-spacing:0.242px;">Vše</span><i class="b" style="left:1220.65px;top:11.200000000000045px;width:1.3px;height:17.2px;background:#2074b4"></i><div class="b" style="left:0;top:39px;width:1222px;height:32px;background:#f2f2f2;border-top:1px solid #dcdcdc;border-bottom:1px solid #cfcfcf"></div><i class="b" style="left:47.0px;top:40.299999999999955px;width:1px;height:32px;background:#d4d4d4"></i><i class="b" style="left:127.0px;top:40.299999999999955px;width:1px;height:32px;background:#d4d4d4"></i><i class="b" style="left:477.0px;top:40.299999999999955px;width:1px;height:32px;background:#d4d4d4"></i><i class="b" style="left:577.0px;top:40.299999999999955px;width:1px;height:32px;background:#d4d4d4"></i><i class="b" style="left:727.0px;top:40.299999999999955px;width:1px;height:32px;background:#d4d4d4"></i><i class="b" style="left:877.0px;top:40.299999999999955px;width:1px;height:32px;background:#d4d4d4"></i><i class="b" style="left:1017.0px;top:40.299999999999955px;width:1px;height:32px;background:#d4d4d4"></i><svg class="i" style="left:15.800000000000011px;top:47.799999999999955px" width="16" height="16" viewBox="0 0 16 16" ><g fill="none" stroke="#6c6c6c" stroke-width="1.1" stroke-linejoin="round" stroke-linecap="round">
<rect x="0.6" y="0.6" width="14.8" height="14.8" rx="1"/>
<path d="M3.2 5.5 H9.2 M3.2 10.5 H4.9 M8.7 10.5 H12.8"/>
<ellipse cx="11" cy="5.5" rx="1.8" ry="1.35"/><ellipse cx="6.8" cy="10.5" rx="1.8" ry="1.35"/></g></svg><span class="t" style="left:55.48px;top:50.00px;font-size:13px;color:#000;letter-spacing:-0.180px;transform:scaleX(0.9452);transform-origin:0 0;font-weight:700;">Číslo</span><svg class="i" style="left:90.89999999999998px;top:50px" width="12" height="11.5" viewBox="0 0 12 11.5" ><path d="M6 11 V1 M1 5.6 L6 0.8 L11 5.6" fill="none" stroke="#222" stroke-width="1.1"/></svg><span class="t" style="left:135.59px;top:50.00px;font-size:13px;color:#606060;letter-spacing:-0.180px;transform:scaleX(0.9921);transform-origin:0 0;">Název dodavatele</span><span class="t" style="left:485.58px;top:50.00px;font-size:13px;color:#606060;letter-spacing:-0.180px;transform:scaleX(0.9169);transform-origin:0 0;">IČO</span><span class="t" style="left:585.38px;top:50.00px;font-size:13px;color:#606060;letter-spacing:-0.154px;">Datum podání</span><span class="t" style="left:735.58px;top:50.00px;font-size:13px;color:#606060;letter-spacing:-0.180px;transform:scaleX(0.9920);transform-origin:0 0;">Stav</span><span class="t" style="left:885.58px;top:50.00px;font-size:13px;color:#606060;letter-spacing:-0.152px;">Podaná po lhůtě</span><span class="t" style="left:1025.59px;top:50.00px;font-size:13px;color:#606060;letter-spacing:-0.067px;">Listinná podoba</span><svg class="i" style="left:109.30000000000001px;top:52.0px" width="8.8" height="7.6" viewBox="-1 -1 8.8 7.6" ><path d="M0.4 0.5 H6.3999999999999995 L3.4 5.3 Z" fill="none" stroke="#555" stroke-width="1.2" stroke-linejoin="round"/></svg><svg class="i" style="left:459.4px;top:52.0px" width="8.8" height="7.6" viewBox="-1 -1 8.8 7.6" ><path d="M0.4 0.5 H6.3999999999999995 L3.4 5.3 Z" fill="none" stroke="#555" stroke-width="1.2" stroke-linejoin="round"/></svg><svg class="i" style="left:559.4px;top:52.0px" width="8.8" height="7.6" viewBox="-1 -1 8.8 7.6" ><path d="M0.4 0.5 H6.3999999999999995 L3.4 5.3 Z" fill="none" stroke="#555" stroke-width="1.2" stroke-linejoin="round"/></svg><svg class="i" style="left:709.4px;top:52.0px" width="8.8" height="7.6" viewBox="-1 -1 8.8 7.6" ><path d="M0.4 0.5 H6.3999999999999995 L3.4 5.3 Z" fill="none" stroke="#555" stroke-width="1.2" stroke-linejoin="round"/></svg><svg class="i" style="left:859.3999999999999px;top:52.0px" width="8.8" height="7.6" viewBox="-1 -1 8.8 7.6" ><path d="M0.4 0.5 H6.3999999999999995 L3.4 5.3 Z" fill="none" stroke="#555" stroke-width="1.2" stroke-linejoin="round"/></svg><svg class="i" style="left:999.5px;top:52.0px" width="8.8" height="7.6" viewBox="-1 -1 8.8 7.6" ><path d="M0.4 0.5 H6.3999999999999995 L3.4 5.3 Z" fill="none" stroke="#555" stroke-width="1.2" stroke-linejoin="round"/></svg><svg class="i" style="left:1203.2px;top:52.0px" width="8.8" height="7.6" viewBox="-1 -1 8.8 7.6" ><path d="M0.4 0.5 H6.3999999999999995 L3.4 5.3 Z" fill="none" stroke="#555" stroke-width="1.2" stroke-linejoin="round"/></svg><svg class="i" style="left:636.3px;top:101.60000000000002px" width="25.5" height="10.6" viewBox="0 0 25.5 10.6" ><path d="M2 0.9 H6.2 Q7.2 0.9 7.9 1.7 Q9.7 4.2 12.75 4.2 Q15.8 4.2 17.6 1.7 Q18.3 0.9 19.3 0.9 H23.2 Q24.4 0.9 24.4 2.1 V8.5 Q24.4 9.7 23.2 9.7 H2 Q0.8 9.7 0.8 8.5 V2.1 Q0.8 0.9 2 0.9 Z" fill="none" stroke="#666" stroke-width="1.4"/></svg><span class="t" style="left:513.38px;top:125.00px;font-size:13px;color:#5a5a5a;letter-spacing:-0.096px;">Žádné záznamy. Nebyla učiněna žádná podání.</span></div></section><i class="b" style="left:1580.6px;top:738.6px;width:2px;height:180px;background:#fff"></i></body></html>
